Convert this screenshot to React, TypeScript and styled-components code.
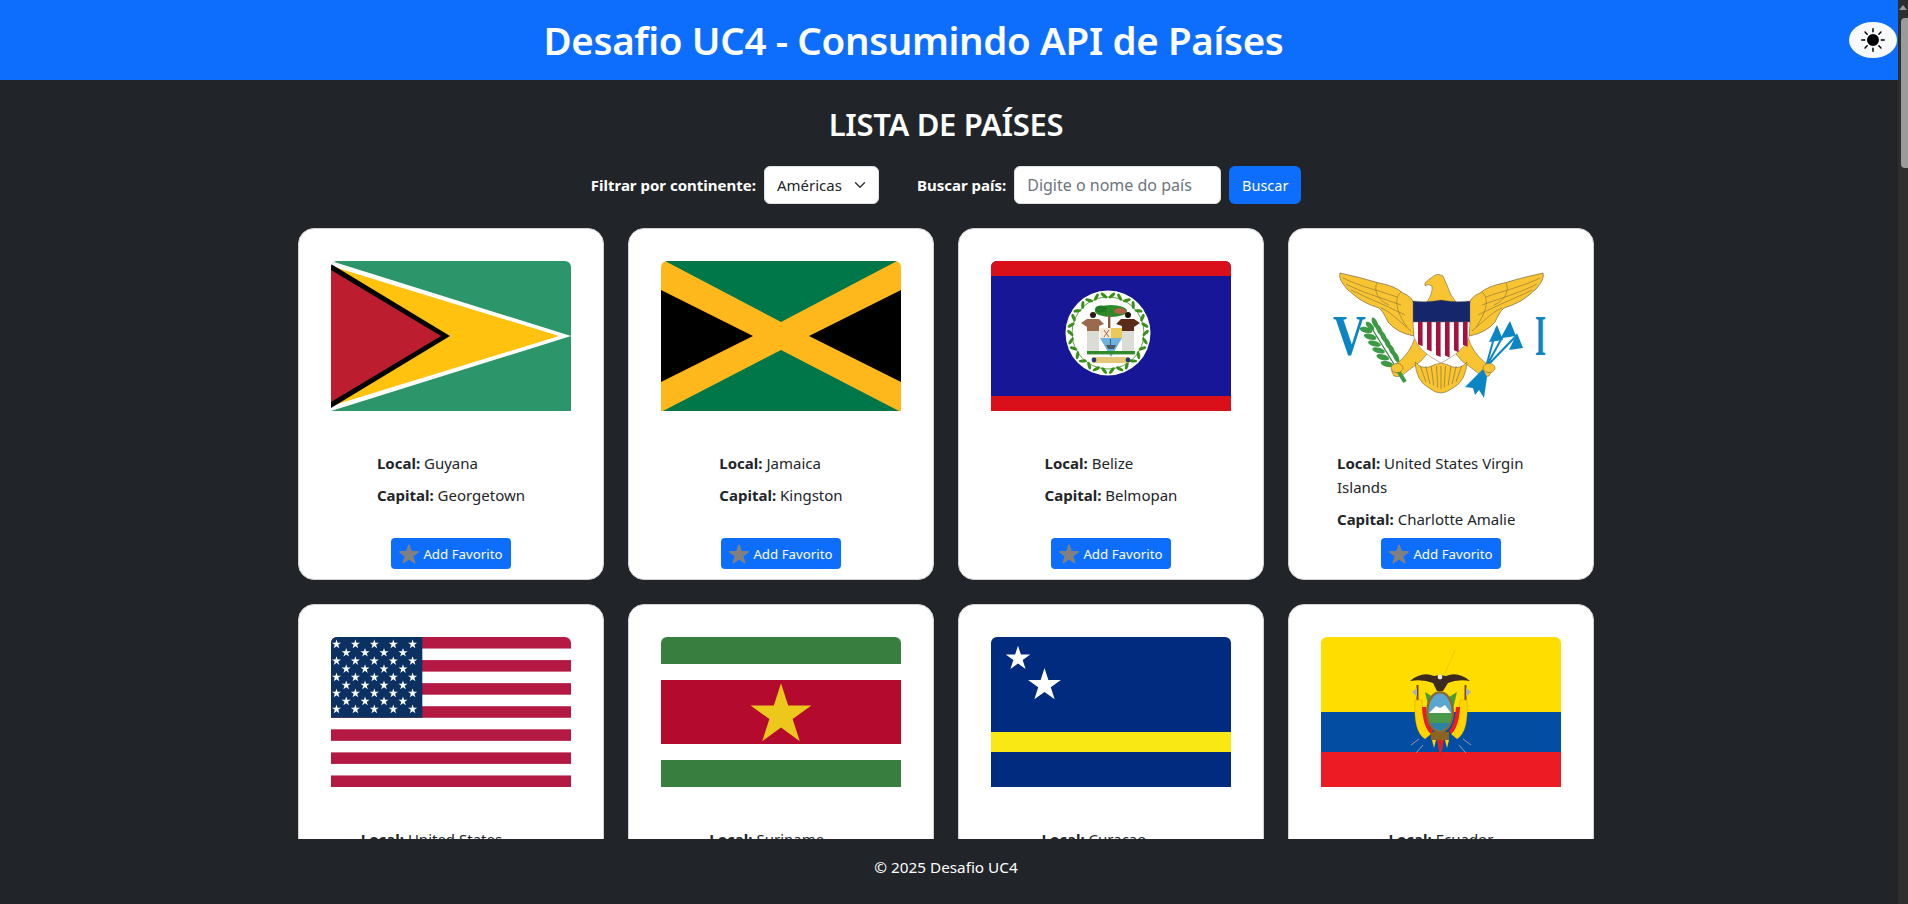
import React from "react";
import styled, { createGlobalStyle } from "styled-components";
import { BsSunFill } from "react-icons/bs";

const GlobalStyle = createGlobalStyle`
  html {
    background: #212529;
  }
  body {
    margin: 0;
    padding-right: 10px;
    background: #212529;
    color: #212529;
    font-family: "Noto Sans", "Open Sans", sans-serif;
    font-size: 16px;
    line-height: 1.5;
  }
  * {
    box-sizing: border-box;
  }
`;

function starPoints(cx: number, cy: number, r: number) {
  const points: string[] = [];
  for (let i = 0; i < 10; i++) {
    const radius = i % 2 === 0 ? r : r * 0.382;
    const angle = (Math.PI / 5) * i - Math.PI / 2;
    points.push(`${cx + radius * Math.cos(angle)},${cy + radius * Math.sin(angle)}`);
  }
  return points.join(" ");
}

function GuyanaFlag() {
  return (
    <FlagSvg viewBox="0 0 240 150">
      <rect width="240" height="150" fill="#2c9569" />
      <polygon points="0,0 240,75 0,150" fill="#fff" />
      <polygon points="0,5 228,75 0,145" fill="#fec20f" />
      <polygon points="0,3 119,75 0,147" fill="#000" />
      <polygon points="0,9 110,75 0,141" fill="#bc1e30" />
    </FlagSvg>
  );
}

function JamaicaFlag() {
  return (
    <FlagSvg viewBox="0 0 240 150">
      <rect width="240" height="150" fill="#feb81c" />
      <polygon points="4,0 120,61 236,0" fill="#007749" />
      <polygon points="2,150 120,89 238,150" fill="#007749" />
      <polygon points="0,29 92,75 0,121" fill="#000" />
      <polygon points="240,29 148,75 240,121" fill="#000" />
    </FlagSvg>
  );
}

const wreathAngles = Array.from({ length: 15 }, (_, i) => i * 24 - 168);

function BelizeFlag() {
  return (
    <FlagSvg viewBox="0 0 240 150">
      <rect width="240" height="150" fill="#171696" />
      <rect width="240" height="15" fill="#d90f19" />
      <rect y="135" width="240" height="15" fill="#d90f19" />
      <circle cx="117" cy="72" r="42.5" fill="#fff" />
      <circle cx="117" cy="72" r="36" fill="none" stroke="#3a8f1a" strokeWidth="0.8" />
      {wreathAngles.map((angle) => (
        <g key={angle} transform={`rotate(${angle} 117 72)`}>
          <ellipse cx="113" cy="34.5" rx="1.6" ry="4" fill="#3a8f1a" transform="rotate(-50 113 34.5)" />
          <ellipse cx="121" cy="34.5" rx="1.6" ry="4" fill="#3a8f1a" transform="rotate(50 121 34.5)" />
        </g>
      ))}
      <ellipse cx="120" cy="50" rx="16" ry="6" fill="#2f8a2a" />
      <ellipse cx="110" cy="48" rx="6" ry="3.6" fill="#1f7a22" />
      <ellipse cx="129" cy="50" rx="6" ry="3" fill="#b5624a" />
      <rect x="117" y="54" width="2.4" height="15" fill="#8a5a3c" />
      <circle cx="102" cy="54" r="3" fill="#2a1a10" />
      <path d="M90 62 L96 58 H108 L113 63 L108 65 L108 70 H96 L96 66 Z" fill="#9a6a4a" />
      <rect x="96" y="70" width="12" height="22" fill="#dcdcd6" />
      <circle cx="137" cy="54" r="3" fill="#1e0f08" />
      <path d="M125 63 L130 58 H143 L149 62 L143 66 L143 70 H131 L131 65 Z" fill="#5a2d1a" />
      <rect x="131" y="70" width="12" height="22" fill="#dcdcd6" />
      <path d="M109 67 H120 V77 H109 Z" fill="#f3ead8" />
      <path d="M120 67 H131 V77 H120 Z" fill="#e9c95a" />
      <path d="M113 69 L118 76 M118 69 L113 76" stroke="#a8552f" strokeWidth="0.9" />
      <path d="M109 77 H131 L120 96 Z" fill="#6fb2dd" />
      <path d="M115 84 H125 L123 88 H117 Z" fill="#4c5a70" />
      <path d="M119.5 78 V84" stroke="#4c5a70" strokeWidth="1" />
      <rect x="96" y="90" width="48" height="3.4" fill="#2f8a2a" />
      <rect x="101" y="96" width="38" height="6" rx="2" fill="#e4c877" />
      <circle cx="103" cy="99" r="2.4" fill="#22387a" />
      <circle cx="137" cy="99" r="2.4" fill="#22387a" />
    </FlagSvg>
  );
}

const leftFeathers = [
  "M22 17 C40 26 60 30 76 36",
  "M25 23 C40 31 58 36 80 44",
  "M30 29 C44 36 60 42 84 54",
  "M56 22 C52 30 58 40 68 44",
  "M80 31 C72 38 76 52 86 66",
  "M60 47 C68 50 76 58 90 70",
];

const tailFeathers = [97, 103, 109, 115, 120, 125, 131, 137, 143];

function VirginIslandsFlag() {
  const gold = "#f8c432";
  const outline = "#7a6a3e";
  const blue = "#0b85c4";
  return (
    <FlagSvg viewBox="0 0 240 150">
      <rect width="240" height="150" fill="#fff" />
      <text
        x="12"
        y="94"
        fontFamily="Liberation Serif"
        fontSize="56"
        fontWeight="700"
        fill={blue}
        textLength="33"
        lengthAdjust="spacingAndGlyphs"
      >
        V
      </text>
      <text
        x="214"
        y="94"
        fontFamily="Liberation Serif"
        fontSize="56"
        fontWeight="700"
        fill={blue}
        textLength="11"
        lengthAdjust="spacingAndGlyphs"
      >
        I
      </text>
      {[0, 1].map((side) => (
        <g key={side} transform={side === 1 ? "translate(241 0) scale(-1 1)" : undefined}>
          <path
            d="M19 12 Q38 16 58 22 Q74 25 82 32 Q92 36 93 44 L93 75 Q76 72 67 61 Q62 50 58 47 Q42 42 33 34 L26 28 Q17 18 19 12 Z"
            fill={gold}
            stroke={outline}
            strokeWidth="0.7"
          />
          {leftFeathers.map((d) => (
            <path key={d} d={d} fill="none" stroke={outline} strokeWidth="0.55" />
          ))}
          <path
            d="M94 76 Q90 92 74 104 Q68 108 73 115 Q80 117 84 112 Q92 106 100 100 L106 93 Z"
            fill={gold}
            stroke={outline}
            strokeWidth="0.6"
          />
        </g>
      ))}
      <path
        d="M104 22 Q108 18 110 17 Q116 11 122 15 Q126 24 130 34 L135 41 H106 Q112 32 111 25 Q107 22 104 25 Z"
        fill={gold}
        stroke={outline}
        strokeWidth="0.6"
      />
      <path
        d="M94 101 Q100 108 108 106 Q114 103 120 102 Q126 103 132 106 Q140 108 146 101 Q145 120 132 127 Q125 132 120 132 Q114 132 108 127 Q95 120 94 101 Z"
        fill={gold}
        stroke={outline}
        strokeWidth="0.6"
      />
      {tailFeathers.map((x) => (
        <line
          key={x}
          x1={x + (120 - x) * 0.1}
          y1="105"
          x2={x + (120 - x) * 0.35}
          y2={128 - Math.abs(120 - x) * 0.3}
          stroke={outline}
          strokeWidth="0.6"
        />
      ))}
      <path d="M92 40 Q106 42 120 39 Q134 42 149 40 V62 H92 Z" fill="#16266a" stroke={outline} strokeWidth="0.4" />
      <path d="M92 61 H149 L148 76 Q144 90 120 102 Q97 90 93 76 Z" fill="#fff" stroke={outline} strokeWidth="0.5" />
      {[97, 106, 115, 124, 133, 142].map((x) => (
        <path
          key={x}
          d={`M${x} 61 h4.6 V${99 - Math.abs(120 - x) * 0.6} L${x} ${97 - Math.abs(120 - x) * 0.6} Z`}
          fill="#a8103e"
        />
      ))}
      <path d="M84 121 L76 108" stroke="#3c9a45" strokeWidth="4" />
      <path d="M76 108 L50 66" stroke="#2f7d38" strokeWidth="1.2" />
      {[0, 1, 2, 3, 4, 5].map((i) => (
        <g key={i}>
          <ellipse
            cx={72 - i * 4.2 - 6}
            cy={103 - i * 6.8}
            rx="6.5"
            ry="2.8"
            fill="#3c9a45"
            transform={`rotate(15 ${72 - i * 4.2 - 6} ${103 - i * 6.8})`}
          />
          <ellipse
            cx={72 - i * 4.2 + 3}
            cy={96 - i * 6.8}
            rx="6"
            ry="2.5"
            fill="#3c9a45"
            transform={`rotate(65 ${72 - i * 4.2 + 3} ${96 - i * 6.8})`}
          />
        </g>
      ))}
      <ellipse cx="49" cy="65" rx="2.6" ry="5.5" fill="#3c9a45" transform="rotate(-45 49 65)" />
      <ellipse cx="76" cy="107" rx="6" ry="4.6" fill={gold} stroke={outline} strokeWidth="0.6" />
      {[
        [176, 66],
        [189, 62],
        [196, 74],
      ].map(([x, y]) => (
        <g key={x}>
          <line x1="165" y1="106" x2={x} y2={y} stroke={blue} strokeWidth="2" />
          <polygon points={`${x},${y - 2} ${x - 8},${y + 15} ${x + 6},${y + 13}`} fill={blue} />
        </g>
      ))}
      <polygon points="162,108 144,126 152,127 154,134 158,129 163,137 166,116" fill={blue} />
      <ellipse cx="168" cy="107" rx="6" ry="4.6" fill={gold} stroke={outline} strokeWidth="0.6" />
    </FlagSvg>
  );
}

const usaStripes = [0, 2, 4, 6, 8, 10, 12];
const usaRows = [7.3, 15.7, 24, 32, 40.3, 48.3, 56.3, 64.3, 72.3];
const usaWide = [5.5, 24.4, 43.3, 62.3, 81.6];
const usaNarrow = [15.2, 34, 53, 72];

function UsaFlag() {
  return (
    <FlagSvg viewBox="0 0 240 150">
      <rect width="240" height="150" fill="#fff" />
      {usaStripes.map((i) => (
        <rect key={i} y={(i * 150) / 13} width="240" height={150 / 13} fill="#b31942" />
      ))}
      <rect width="91.3" height="80.7" fill="#0a3161" />
      {usaRows.map((y, row) =>
        (row % 2 === 0 ? usaWide : usaNarrow).map((x) => (
          <polygon key={`${x}-${y}`} points={starPoints(x, y, 4.8)} fill="#fff" />
        )),
      )}
    </FlagSvg>
  );
}

function SurinameFlag() {
  return (
    <FlagSvg viewBox="0 0 240 150">
      <rect width="240" height="150" fill="#fff" />
      <rect width="240" height="27" fill="#377e3f" />
      <rect y="43" width="240" height="64" fill="#b40a2d" />
      <rect y="123" width="240" height="27" fill="#377e3f" />
      <polygon points={starPoints(120, 78.3, 32)} fill="#ecc81d" />
    </FlagSvg>
  );
}

function CuracaoFlag() {
  return (
    <FlagSvg viewBox="0 0 240 150">
      <rect width="240" height="150" fill="#002b7f" />
      <rect y="95" width="240" height="20" fill="#f9e814" />
      <polygon points={starPoints(27, 21.6, 12.9)} fill="#fff" />
      <polygon points={starPoints(53.5, 48.3, 17.3)} fill="#fff" />
    </FlagSvg>
  );
}

function EcuadorFlag() {
  return (
    <FlagSvg viewBox="0 0 240 150">
      <rect width="240" height="150" fill="#ffdd00" />
      <rect y="75" width="240" height="40" fill="#034ea2" />
      <rect y="115" width="240" height="35" fill="#ed1c24" />
      <line x1="124" y1="36" x2="134" y2="13" stroke="#d9bd10" strokeWidth="0.6" />
      <line x1="98" y1="102" x2="90" y2="108" stroke="#9a9a9a" strokeWidth="1" />
      <line x1="102" y1="108" x2="95" y2="116" stroke="#9a9a9a" strokeWidth="1" />
      <line x1="142" y1="102" x2="150" y2="108" stroke="#9a9a9a" strokeWidth="1" />
      <line x1="138" y1="108" x2="145" y2="116" stroke="#9a9a9a" strokeWidth="1" />
      <rect x="95.5" y="48" width="2" height="26" fill="#7c4a2a" />
      <rect x="143.5" y="48" width="2" height="26" fill="#7c4a2a" />
      <polygon points="91,55 96,51 96,60" fill="#b0b0b0" />
      <polygon points="150,55 145,51 145,60" fill="#b0b0b0" />
      <path d="M94 63 Q92 95 104 102 L110 97 Q102 90 101 63 Z" fill="#ffd400" stroke="#a08a10" strokeWidth="0.3" />
      <path d="M146 63 Q148 95 136 102 L130 97 Q138 90 139 63 Z" fill="#ffd400" stroke="#a08a10" strokeWidth="0.3" />
      <path d="M101 70 Q102 90 110 97 L112 94 Q106 88 105 70 Z" fill="#ed1c24" />
      <path d="M139 70 Q138 90 130 97 L128 94 Q134 88 135 70 Z" fill="#ed1c24" />
      <path d="M104 55 L108 72 L112 60 Z" fill="#4f9a35" />
      <path d="M136 55 L132 72 L128 60 Z" fill="#4f9a35" />
      <path d="M89 44 Q101 34 113 39 L119 38 L125 39 Q137 34 149 44 Q136 42 127 46 L122 54 L116 54 L112 46 Q102 42 89 44 Z" fill="#3d2a1e" />
      <circle cx="119" cy="40" r="2.4" fill="#e8e4d8" />
      <ellipse cx="119" cy="75" rx="14" ry="21" fill="#8a6a2f" />
      <ellipse cx="119" cy="75" rx="11.5" ry="18.5" fill="#5aa6cf" />
      <path d="M108 76 L115 69 L119 71 L124 68 L130 76 Z" fill="#fff" />
      <path d="M107.6 76 H130.4 Q130.6 82 129 86 H109 Q107.4 82 107.6 76 Z" fill="#4b9a4a" />
      <path d="M109 86 H129 Q125 93 119 93.5 Q113 93 109 86 Z" fill="#2d82a8" />
      <rect x="110" y="95" width="18" height="8" fill="#8a6420" />
      <path d="M116 103 H123 L121 114 L120 121 L118 114 Z" fill="#d6202a" />
      <path d="M111 103 L115 103 L113 111 Z" fill="#ffd400" />
      <path d="M124 103 L128 103 L126 111 Z" fill="#ffd400" />
    </FlagSvg>
  );
}

interface Country {
  name: string;
  capital: string;
  Flag: () => React.JSX.Element;
}

const countries: Country[] = [
  { name: "Guyana", capital: "Georgetown", Flag: GuyanaFlag },
  { name: "Jamaica", capital: "Kingston", Flag: JamaicaFlag },
  { name: "Belize", capital: "Belmopan", Flag: BelizeFlag },
  { name: "United States Virgin Islands", capital: "Charlotte Amalie", Flag: VirginIslandsFlag },
  { name: "United States", capital: "Washington, D.C.", Flag: UsaFlag },
  { name: "Suriname", capital: "Paramaribo", Flag: SurinameFlag },
  { name: "Curaçao", capital: "Willemstad", Flag: CuracaoFlag },
  { name: "Ecuador", capital: "Quito", Flag: EcuadorFlag },
];

function App() {
  return (
    <>
      <GlobalStyle />
      <Header>
        <Title>Desafio UC4 - Consumindo API de Países</Title>
        <ThemeToggle aria-label="Alternar tema">
          <BsSunFill size={24} />
        </ThemeToggle>
      </Header>
      <Main>
        <Container>
          <Heading>LISTA DE PAÍSES</Heading>
          <Filters>
            <FilterLabel htmlFor="continent">Filtrar por continente:</FilterLabel>
            <ContinentSelect id="continent" defaultValue="Américas">
              <option>Américas</option>
              <option>Europa</option>
              <option>Ásia</option>
              <option>África</option>
              <option>Oceania</option>
            </ContinentSelect>
            <SearchLabel htmlFor="search">Buscar país:</SearchLabel>
            <SearchInput id="search" placeholder="Digite o nome do país" />
            <SearchButton>Buscar</SearchButton>
          </Filters>
          <CardGrid>
            {countries.map(({ name, capital, Flag }) => (
              <Card key={name}>
                <FlagFrame>
                  <Flag />
                </FlagFrame>
                <Info>
                  <InfoLine>
                    <strong>Local:</strong> {name}
                  </InfoLine>
                  <InfoLine>
                    <strong>Capital:</strong> {capital}
                  </InfoLine>
                </Info>
                <FavoriteButton>
                  <StarIcon viewBox="0 0 24 24">
                    <polygon points={starPoints(12, 13, 11.5)} />
                  </StarIcon>
                  Add Favorito
                </FavoriteButton>
              </Card>
            ))}
          </CardGrid>
        </Container>
      </Main>
      <Footer>© 2025 Desafio UC4</Footer>
      <ScrollTrack>
        <ScrollArrow />
        <ScrollThumb />
      </ScrollTrack>
    </>
  );
}

const Header = styled.header`
  height: 80px;
  background: #0d6efd;
  display: flex;
  align-items: center;
  padding-right: 1px;
`;

const Title = styled.h1`
  flex: 1;
  margin: 0;
  padding-right: 22px;
  color: #fff;
  font-size: 38.5px;
  font-weight: 600;
  letter-spacing: -0.36px;
  line-height: 48px;
  text-align: center;
`;

const ThemeToggle = styled.button`
  width: 48px;
  height: 36px;
  padding: 0;
  border: none;
  border-radius: 50%;
  background: #f8f9fa;
  color: #000;
  display: flex;
  align-items: center;
  justify-content: center;
`;

const Main = styled.main`
  padding: 25px 6px 0 0;
`;

const Container = styled.div`
  width: 1296px;
  margin: 0 auto;
`;

const Heading = styled.h2`
  margin: 0 0 23px;
  color: #fff;
  font-size: 31px;
  font-weight: 600;
  letter-spacing: -0.3px;
  line-height: 38px;
  text-align: center;
`;

const Filters = styled.div`
  display: flex;
  align-items: center;
  justify-content: center;
  gap: 8px;
  margin-bottom: 24px;
`;

const FilterLabel = styled.label`
  color: #fff;
  font-size: 15px;
  font-weight: 700;
`;

const SearchLabel = styled(FilterLabel)`
  margin-left: 30px;
`;

const ContinentSelect = styled.select`
  width: 115px;
  height: 38px;
  padding: 0 12px;
  border: 1px solid #dee2e6;
  border-radius: 6px;
  color: #212529;
  font-family: inherit;
  font-size: 15px;
  appearance: none;
  background: #fff
    url("data:image/svg+xml,%3csvg xmlns='http://www.w3.org/2000/svg' viewBox='0 0 16 16'%3e%3cpath fill='none' stroke='%23343a40' stroke-linecap='round' stroke-linejoin='round' stroke-width='2' d='m2 5 6 6 6-6'/%3e%3c/svg%3e")
    no-repeat right 12px center / 12px 12px;
`;

const SearchInput = styled.input`
  width: 207px;
  height: 38px;
  padding: 0 12px;
  border: 1px solid #dee2e6;
  border-radius: 6px;
  background: #fff;
  color: #212529;
  font: inherit;
  &::placeholder {
    color: #6c757d;
  }
`;

const SearchButton = styled.button`
  width: 72px;
  height: 38px;
  padding: 0;
  border: none;
  border-radius: 6px;
  background: #0d6efd;
  color: #fff;
  font-family: inherit;
  font-size: 14.5px;
`;

const CardGrid = styled.div`
  display: grid;
  grid-template-columns: repeat(4, 306px);
  gap: 24px;
`;

const Card = styled.article`
  height: 352px;
  padding: 32px 32px 10px;
  border: 1px solid #cfd0d2;
  border-radius: 16px;
  background: #fff;
  display: flex;
  flex-direction: column;
  align-items: center;
`;

const FlagFrame = styled.div`
  width: 240px;
  height: 150px;
  flex: none;
  overflow: hidden;
  border-radius: 6px 6px 0 0;
`;

const FlagSvg = styled.svg`
  display: block;
  width: 240px;
  height: 150px;
`;

const Info = styled.div`
  width: fit-content;
  max-width: 208px;
  height: 80px;
  flex: none;
  margin-top: 40px;
`;

const InfoLine = styled.p`
  margin: 0 0 8px;
  color: #212529;
  font-size: 15px;
  line-height: 24px;
  strong {
    font-weight: 700;
  }
`;

const FavoriteButton = styled.button`
  margin-top: auto;
  width: 120px;
  height: 31px;
  padding: 0;
  border: none;
  border-radius: 4px;
  background: #0d6efd;
  color: #fff;
  font-family: inherit;
  font-size: 13.3px;
  display: flex;
  align-items: center;
  justify-content: center;
  gap: 4px;
`;

const StarIcon = styled.svg`
  width: 20px;
  height: 20px;
  fill: #808080;
  stroke: #808080;
  stroke-width: 2;
  stroke-linejoin: round;
`;

const Footer = styled.footer`
  position: fixed;
  left: 0;
  right: 10px;
  bottom: 0;
  height: 65px;
  padding: 17px 6px 0 0;
  background: #212529;
  color: #fff;
  font-size: 15.3px;
  text-align: center;
`;

const ScrollTrack = styled.div`
  position: fixed;
  top: 0;
  right: 0;
  bottom: 0;
  width: 10px;
  background: #2e2e2e;
  display: flex;
  flex-direction: column;
  align-items: flex-end;
`;

const ScrollArrow = styled.div`
  width: 0;
  height: 0;
  margin: 5px 1px 6px 0;
  border-left: 4px solid transparent;
  border-right: 4px solid transparent;
  border-bottom: 5px solid #9b9b9b;
`;

const ScrollThumb = styled.div`
  width: 7px;
  height: 150px;
  margin-top: 2px;
  border-radius: 4px 0 0 4px;
  background: #9b9b9b;
`;

export default App;
